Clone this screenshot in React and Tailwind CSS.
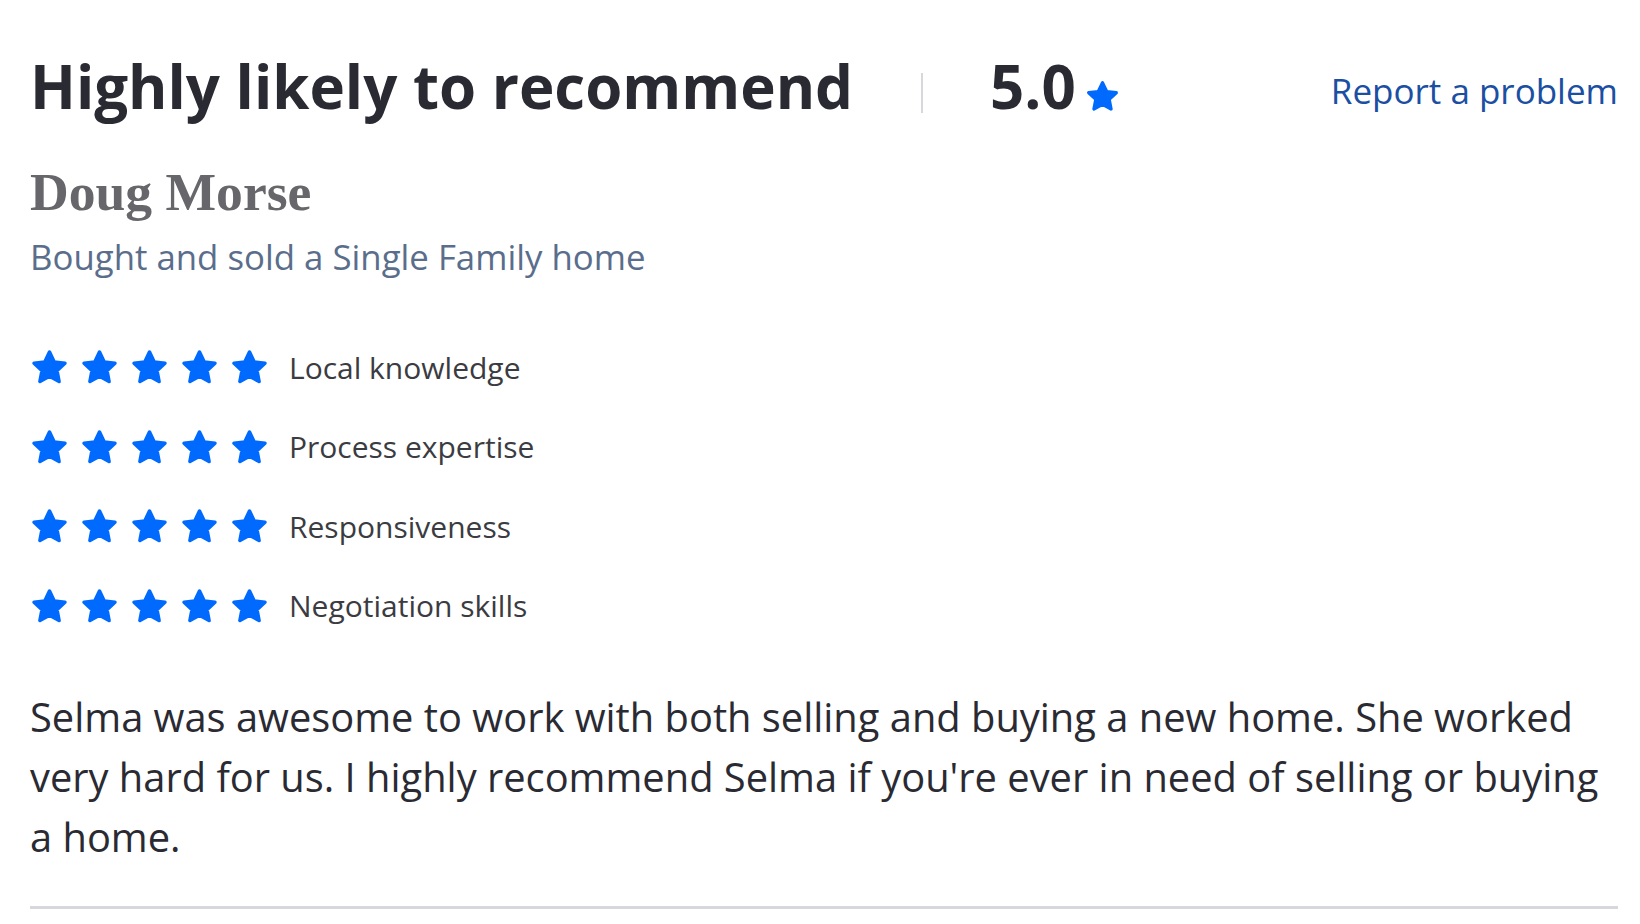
import React from 'react';

const ratings = ['Local knowledge', 'Process expertise', 'Responsiveness', 'Negotiation skills'];

function Star({ className }) {
  return (
    <svg className={className} viewBox="0 0 24 24" fill="#006aff" stroke="#006aff" strokeWidth="2.2" strokeLinejoin="round">
      <polygon points="12,2.5 14.9,8.6 21.5,9.4 16.6,13.9 17.9,20.6 12,17.3 6.1,20.6 7.4,13.9 2.5,9.4 9.1,8.6" />
    </svg>
  );
}

export default function App() {
  return (
    <div className="min-h-screen bg-white pl-[30px] pr-[22px] pt-[56px] font-['Open_Sans',sans-serif]">
      {/* Header */}
      <div className="flex items-start justify-between">
        <div className="flex items-baseline">
          <h1 className="text-[60px] font-bold leading-none text-[#2a2a33]">Highly likely to recommend</h1>
          <span className="ml-[68px] mr-[67px] mb-[3px] inline-block h-[40px] w-[2px] self-end bg-[#d8d8dc]" />
          <span className="text-[60px] font-bold leading-none text-[#2a2a33]">5.0</span>
          <Star className="ml-[9px] mb-[2px] h-[35px] w-[35px] self-end" />
        </div>
        <a className="mt-[17px] text-[35px] leading-none text-[#1a4fa3]">Report a problem</a>
      </div>

      {/* Reviewer */}
      <div className="mt-[50px] font-['Liberation_Serif',serif] text-[53.6px] font-bold leading-none text-[#67676b]">
        Doug Morse
      </div>
      <div className="mt-[20px] text-[34.8px] leading-none text-[#5a6e8c]">Bought and sold a Single Family home</div>

      {/* Sub ratings */}
      <div className="mt-[74px] flex flex-col gap-[40.5px]">
        {ratings.map((label) => (
          <div key={label} className="flex items-center">
            <div className="flex gap-[11px]">
              {[0, 1, 2, 3, 4].map((i) => (
                <Star key={i} className="h-[39px] w-[39px]" />
              ))}
            </div>
            <span className="ml-[20px] text-[30px] leading-none text-[#3b3b42]">{label}</span>
          </div>
        ))}
      </div>

      {/* Review body */}
      <p className="mt-[61px] text-[39.85px] leading-[60px] text-[#2a2a33]">
        Selma was awesome to work with both selling and buying a new home. She worked very hard for us. I highly recommend Selma if you're ever in need of selling or buying a home.
      </p>

      <div className="mt-[39px] h-[3px] bg-[#d8d8dc]" />
    </div>
  );
}
